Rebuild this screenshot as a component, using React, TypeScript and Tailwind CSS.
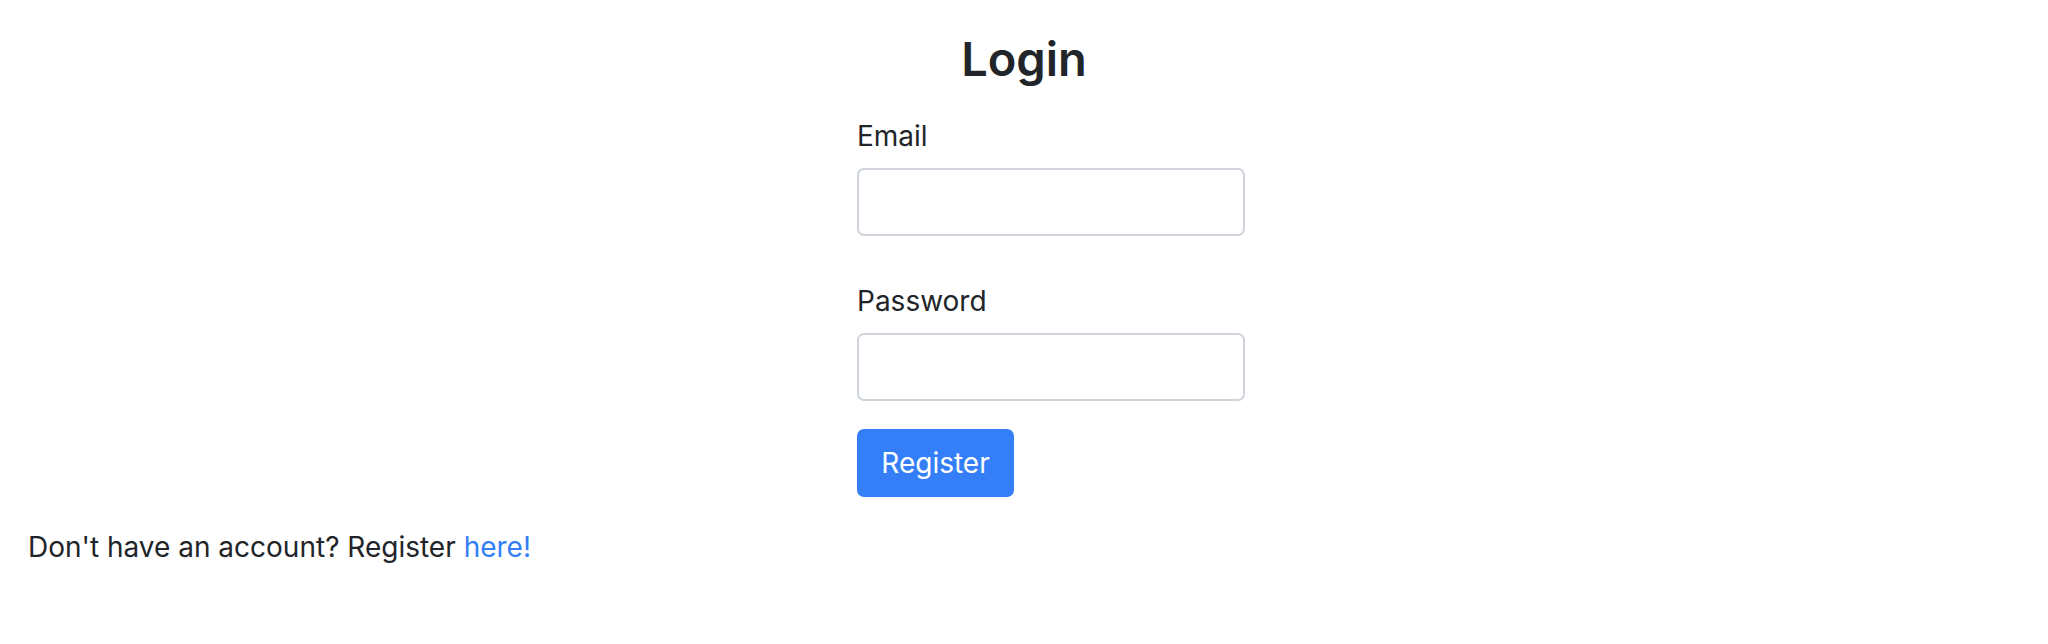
export default function App() {
  return (
    <div className="min-h-[644px] bg-white font-['Inter',sans-serif] text-[#212529]">
      <h1 className="pt-[31px] text-center text-[47px] font-semibold leading-[1.2]">Login</h1>

      <form className="ml-[857px] mt-[28px] flex w-[388px] flex-col" onSubmit={(e) => e.preventDefault()}>
        <label className="text-[28px] leading-[42px]">Email</label>
        <input
          type="email"
          className="mt-[11px] h-[68px] w-full rounded-[7px] border-2 border-[#ced4da] bg-white px-[21px] text-[28px] outline-none"
        />

        <label className="mt-[44px] text-[28px] leading-[42px]">Password</label>
        <input
          type="password"
          className="mt-[11px] h-[68px] w-full rounded-[7px] border-2 border-[#ced4da] bg-white px-[21px] text-[28px] outline-none"
        />

        <button
          type="submit"
          className="mt-[28px] h-[68px] w-[157px] rounded-[7px] bg-[#347ff7] text-[28px] leading-[42px] text-white"
        >
          Register
        </button>
      </form>

      <p className="ml-[28px] mt-[29px] text-[28px] leading-[42px]">
        Don't have an account? Register <a href="#" className="text-[#347ff7]">here!</a>
      </p>
    </div>
  );
}
